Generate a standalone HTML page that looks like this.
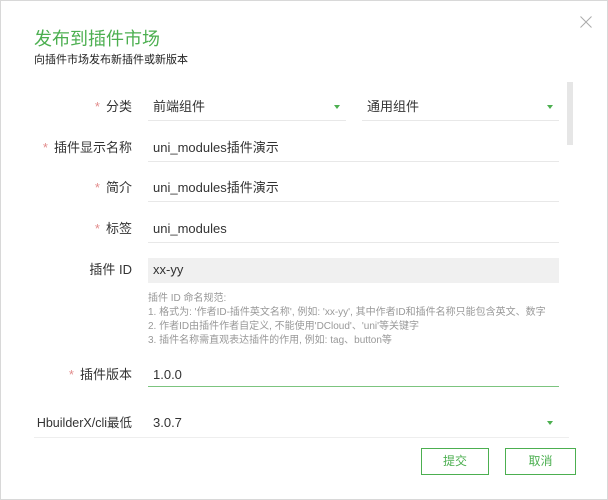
<!DOCTYPE html><html><head><meta charset="utf-8"><style>
body{margin:0;width:608px;height:500px;overflow:hidden;background:#fff;font-family:"Liberation Sans","Noto Sans CJK SC",sans-serif;}
.frame{position:absolute;left:0;top:0;width:606px;height:498px;border:1px solid #d8d8d8;}
.abs{position:absolute;white-space:nowrap;}
.lbl{position:absolute;right:476px;font-size:13px;line-height:16px;color:#333;white-space:nowrap;}
.lbl i{font-style:normal;color:#e28b8b;margin-right:6px;}
.val{position:absolute;left:153px;font-size:13px;line-height:16px;color:#333;white-space:nowrap;}
.ul{position:absolute;height:1px;background:#e8e8e8;}
.arr{position:absolute;width:0;height:0;border-left:3px solid transparent;border-right:3px solid transparent;border-top:4px solid #4caf50;}
.help{position:absolute;left:148px;font-size:10px;line-height:13px;color:#999;white-space:nowrap;}
.btn{position:absolute;top:448px;height:25px;border:1px solid #4caf50;color:#4caf50;font-size:12px;text-align:center;line-height:25px;}
</style></head><body><div class="frame"></div>
<div class="abs" style="left:34px;top:25px;font-size:18px;color:#4caf50;">发布到插件市场</div>
<div class="abs" style="left:34px;top:51px;font-size:11px;color:#222;">向插件市场发布新插件或新版本</div>
<svg class="abs" style="left:580px;top:16px" width="12" height="12"><path d="M0.5 0.5L11.5 11.5M11.5 0.5L0.5 11.5" stroke="#aaa" stroke-width="1"/></svg>
<div class="abs" style="left:567px;top:82px;width:6px;height:63px;background:#e6e6e6;"></div>

<div class="lbl" style="top:99px"><i>*</i>分类</div>
<div class="val" style="top:99px">前端组件</div>
<div class="ul" style="left:148px;width:198px;top:120px"></div>
<div class="arr" style="left:334px;top:105px"></div>
<div class="val" style="left:367px;top:99px">通用组件</div>
<div class="ul" style="left:362px;width:197px;top:120px"></div>
<div class="arr" style="left:547px;top:105px"></div>

<div class="lbl" style="top:140px"><i>*</i>插件显示名称</div>
<div class="val" style="top:140px">uni_modules插件演示</div>
<div class="ul" style="left:148px;width:411px;top:161px"></div>

<div class="lbl" style="top:180px"><i>*</i>简介</div>
<div class="val" style="top:180px">uni_modules插件演示</div>
<div class="ul" style="left:148px;width:411px;top:201px"></div>

<div class="lbl" style="top:221px"><i>*</i>标签</div>
<div class="val" style="top:221px">uni_modules</div>
<div class="ul" style="left:148px;width:411px;top:242px"></div>

<div class="abs" style="left:148px;top:258px;width:411px;height:25px;background:#f0f0f0;"></div>
<div class="lbl" style="top:262px">插件 ID</div>
<div class="val" style="top:262px">xx-yy</div>
<div class="help" style="top:292px">插件 ID 命名规范:</div>
<div class="help" style="top:306px">1. 格式为: '作者ID-插件英文名称', 例如: 'xx-yy', 其中作者ID和插件名称只能包含英文、数字</div>
<div class="help" style="top:320px">2. 作者ID由插件作者自定义, 不能使用'DCloud'、'uni'等关键字</div>
<div class="help" style="top:334px">3. 插件名称需直观表达插件的作用, 例如: tag、button等</div>

<div class="lbl" style="top:367px"><i>*</i>插件版本</div>
<div class="val" style="top:367px">1.0.0</div>
<div class="ul" style="left:148px;width:411px;top:386px;background:#7cc47f"></div>

<div class="lbl" style="top:415px;font-size:12.5px">HbuilderX/cli最低</div>
<div class="val" style="top:415px">3.0.7</div>
<div class="arr" style="left:547px;top:421px"></div>
<div class="ul" style="left:34px;width:535px;top:437px;background:#eee"></div>

<div class="btn" style="left:421px;width:66px">提交</div>
<div class="btn" style="left:505px;width:69px">取消</div>
</body></html>
